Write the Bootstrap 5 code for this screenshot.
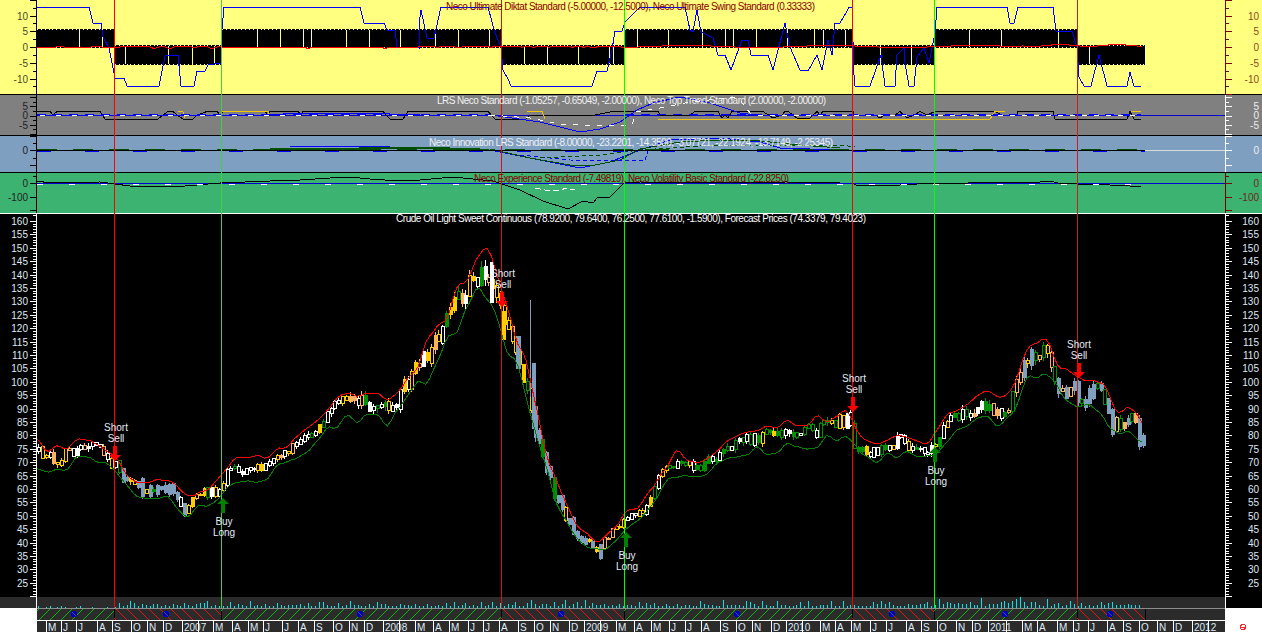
<!DOCTYPE html>
<html lang="en">
<head>
<meta charset="utf-8">
<title>Crude Oil Light Sweet Continuous</title>
<link href="https://cdn.jsdelivr.net/npm/bootstrap@5.3.0/dist/css/bootstrap.min.css" rel="stylesheet">
<style>
html,body{margin:0;background:#fff;overflow:hidden}
.stage{width:1262px;height:632px;overflow:hidden}
.pane{width:1262px;flex:none}
.pane svg{display:block;width:1262px;height:100%}
.pane-yellow{height:95px;background:#ffff80}
.pane-grey{height:41px;background:#808080}
.pane-blue{height:37px;background:#7f9fc0}
.pane-green{height:41px;background:#3cb371}
.pane-main{height:394px;background:#000}
.pane-foot{height:24px;background:#fff}
.overlay{left:0;top:0;width:1262px;height:632px;pointer-events:none}
svg text{font-family:"Liberation Sans",Arial,sans-serif;font-size:10px}
.crisp *{shape-rendering:crispEdges}
.crisp .smooth-line{shape-rendering:auto}
</style>
</head>
<body>
<div class="stage position-relative d-flex flex-column">
  <div class="pane pane-yellow"><svg class="crisp" id="sy" viewBox="0 0 1262 95"></svg></div>
  <div class="pane pane-grey"><svg class="crisp" id="sg" viewBox="0 95 1262 41"></svg></div>
  <div class="pane pane-blue"><svg class="crisp" id="sb" viewBox="0 136 1262 37"></svg></div>
  <div class="pane pane-green"><svg class="crisp" id="sn" viewBox="0 173 1262 41"></svg></div>
  <div class="pane pane-main"><svg class="crisp" id="sm" viewBox="0 214 1262 394"></svg></div>
  <div class="pane pane-foot"><svg class="crisp" id="sf" viewBox="0 608 1262 24"></svg></div>
  <svg class="overlay position-absolute" id="so" viewBox="0 0 1262 632">
    <g class="crisp" id="sol"></g>
    <text x="446" y="10" textLength="369" lengthAdjust="spacing" fill="#8b0000">Neco Ultimate Diktat Standard (-5.00000, -12.5000), Neco Ultimate Swing Standard (0.33333)</text>
    <text x="437" y="104" textLength="389" lengthAdjust="spacing" fill="#f0f0f0">LRS Neco Standard (-1.05257, -0.65049, -2.00000), Neco Top Trend Standard (2.00000, -2.00000)</text>
    <text x="429" y="146" textLength="404" lengthAdjust="spacing" fill="#f0f0f0">Neco Innovation LRS Standard (-8.00000, -23.2201, -14.3500, -3.07721, -22.1924, -13.7149, -2.25345)</text>
    <text x="474" y="182" textLength="315" lengthAdjust="spacing" fill="#8b0000">Neco Experience Standard (-7.49819), Neco Volatility Basic Standard (-22.8250)</text>
    <text x="396" y="222" textLength="470" lengthAdjust="spacing" fill="#fff">Crude Oil Light Sweet Continuous (78.9200, 79.6400, 76.2500, 77.6100, -1.5900), Forecast Prices (74.3379, 79.4023)</text>
    <g id="sig"></g>
  </svg>
</div>
<script>
const $=id=>document.getElementById(id);
const add=(id,s)=>{$(id).insertAdjacentHTML('beforeend',s)};
function rng(a){return function(){a|=0;a=a+0x6D2B79F5|0;let t=Math.imul(a^a>>>15,1|a);t=t+Math.imul(t^t>>>7,61|t)^t;return((t^t>>>14)>>>0)/4294967296}}
const pl=(p,c,w,extra)=>`<polyline fill="none" stroke="${c}" stroke-width="${w||1}" ${extra||''} points="${p.map(a=>a.join(',')).join(' ')}"/>`;
const ln=(x1,y1,x2,y2,c,extra)=>`<line x1="${x1}" y1="${y1}" x2="${x2}" y2="${y2}" stroke="${c}" ${extra||''}/>`;
const rc=(x,y,w,h,c)=>`<rect x="${x}" y="${y}" width="${w}" height="${h}" fill="${c}"/>`;
const tx=(x,y,t,c,a)=>`<text x="${x}" y="${y}" fill="${c}" text-anchor="${a||'end'}">${t}</text>`;
const SIG=[[36,'g'],[114,'r'],[221,'g'],[501,'r'],[624,'g'],[852,'r'],[934,'g'],[1077,'r'],[1145,'']];

function axis(id,L,R,ticks,labs,lc,rc2){
  let s=ln(36.5,L[0],36.5,L[1],lc.a)+ln(1225.5,L[0],1225.5,L[1],rc2.a);
  ticks.forEach(t=>{const y=t[0]+.5,M=t[1];
    s+=ln(M?30:33,y,36,y,lc.a)+ln(1226,y,M?1232:1229,y,rc2.a)});
  labs.forEach(t=>{s+=tx(28,t[0]+3.5,t[1],lc.t)+tx(1259,t[0]+3.5,t[1],rc2.t)});
  add(id,s);
}
/* ---------- yellow pane ---------- */
(function(){
  let s='';const r=rng(11);
  const gaps=[79,102,125,168,192,214,257,280,303,311,346,369,400,435,458,489,524,547,578,609,613,637,668,702,725,733,756,787,814,823,845,880,911,969,1001,1058,1089];
  for(let i=0;i<SIG.length-1;i++){
    const a=SIG[i][0]+1,b=SIG[i+1][0]+(i==SIG.length-2?0:1),long=SIG[i][1]=='g';
    const t=long?29:45,h=long?19:19.5;
    s+=rc(a,t,b-a,h,'#000');
    s+=ln(a,t+.5,b,t+.5,'#ffff80','stroke-dasharray="1 2.85"');
    s+=ln(a,t+h-.5,b,t+h-.5,'#ffff80','stroke-dasharray="1 2.85"');
  }
  gaps.forEach(g=>{const neg=SIG.some((q,i)=>q[1]=='r'&&g>q[0]&&g<SIG[i+1][0]);s+=ln(g+.5,neg?46:30,g+.5,neg?64:47,'#ffff80')});
  const red=[];for(let x=37;x<=1144;x+=3.85){let y=47;
    if(x<115)y=47+(r()<.2?-1:0);
    else if(x<221)y=46.5+(r()<.3?1.5:0);
    else if(x<420)y=47+(r()<.25?1:0);
    else if(x<624)y=46.5+(r()<.2?1:-.5);
    else if(x<1020)y=46.5+Math.sin(x/23);
    else y=45.5+Math.sin(x/9)*.9;
    red.push([x.toFixed(1),y])}
  const blue=[[37,7],[89,7],[93,23],[101,23],[103,37],[109,48],[115,78],[124,78],[127,86],[159,86],[165,56],[178,55],[181,86],[194,86],[197,71],[205,71],[208,65],[221,63],[221,40],[224,7],[360,7],[364,23],[384,23],[387,30],[395,31],[397,47],[419,48],[419,25],[421,10],[427,38],[434,38],[441,7],[488,7],[495,33],[501,47],[503,70],[508,79],[511,86],[592,86],[597,71],[607,71],[612,50],[615,31],[622,31],[625,22],[640,7],[685,7],[690,30],[693,32],[697,10],[701,32],[713,38],[718,55],[725,55],[731,70],[742,40],[748,40],[751,55],[768,55],[773,70],[785,23],[790,47],[800,70],[808,71],[817,55],[822,70],[828,40],[832,55],[835,23],[840,23],[846,13],[849,7],[852,7],[854,75],[855,86],[870,86],[881,55],[885,86],[895,86],[897,55],[904,48],[905,63],[909,86],[914,86],[917,57],[924,48],[929,63],[935,33],[937,7],[1007,7],[1010,23],[1014,23],[1018,7],[1053,7],[1056,31],[1072,31],[1077,47],[1079,77],[1084,86],[1091,86],[1099,55],[1107,86],[1127,86],[1130,72],[1134,86],[1141,86]];
  s+=pl(blue,'#0000ff',1)+pl(red,'#ff0000',1);
  s+=rc(0,94,1262,1,'#000');
  add('sy',s);
  const t=[];for(let v=-15;v<=15;v+=2.5){t.push([Math.round(47-v*3.15),v%5==0])}
  axis('sy',[0,94],0,t,[[16,'10'],[31,'5'],[47,'0'],[63,'-5'],[79,'-10']],{a:'#000',t:'#4a4a28'},{a:'#7a0000',t:'#8a4a20'});
})();
/* ---------- grey pane ---------- */
(function(){
  let s='';
  s+=ln(37,115.5,1225,115.5,'#0000d0');
  const top=111.5,lo=119,m=115;
  const black=[[37,top],[50,top],[53,m],[57,top],[100,top],[105,lo],[158,lo],[163,m],[168,top],[173,top],[177,m],[183,lo],[193,lo],[197,m],[207,top],[217,top],[220,m],[223,top],[265,top],[268,m],[270,top],[298,top],[301,m],[303,top],[383,top],[390,lo],[403,lo],[408,top],[488,top],[495,lo],[526,lo],[530,m],[595,m],[613,top],[658,top],[660,m],[690,m],[695,top],[718,top],[722,118],[725,m],[728,118],[732,top],[763,top],[770,116],[773,118],[782,m],[785,top],[788,top],[797,118],[810,118],[817,top],[820,m],[823,top],[853,top],[854,m],[875,m],[880,118],[885,m],[895,m],[900,top],[907,118],[914,m],[920,top],[927,m],[935,top],[995,top],[1002,m],[1017,m],[1017,top],[1053,top],[1055,lo],[1127,lo],[1130,top],[1134,lo],[1141,lo]];
  s+=pl(black,'#000');
  s+=pl([[178,111.5],[183,112],[185,118]],'#f5c400');
  s+=pl([[222,111.5],[268,111.5],[269,115]],'#f5c400');
  s+=pl([[527,111],[542,111],[545,119]],'#f5c400');
  s+=pl([[658,119],[990,119],[995,111.5],[1005,111.5]],'#f5c400');
  s+=pl([[1131,111],[1141,111]],'#f5c400');
  s+=pl([[37,116],[270,115],[290,113.5],[380,113.5],[400,114.5],[420,115],[491,115],[540,122],[580,132],[600,129],[620,122],[637,110],[653,103],[680,97],[710,103],[740,113],[760,115.5],[1141,115]],'#0000ff');
  s+=ln(37,114.5,490,114.5,'#0000ff','stroke-dasharray="9 7" stroke-width="1"');
  s+=ln(625,114.5,1141,114.5,'#0000ff','stroke-dasharray="9 7" stroke-width="1"');
  s+=pl([[40,116],[490,115]],'#fff',1,'stroke-dasharray="5 11"');
  s+=pl([[490,115],[530,118],[560,124],[600,126],[632,125],[636,112],[660,108],[690,102],[738,97],[745,107],[752,115],[1141,115]],'#fff',1,'stroke-dasharray="5 7"');
  s+=rc(0,135,1262,1,'#000');
  add('sg',s);
  const t=[];for(let v=-10;v<=10;v+=2.5){const y=Math.round(115.5-v*1.85);if(y>95&&y<135)t.push([y,v%5==0])}
  axis('sg',[95,135],0,t,[[106,'5'],[115,'0'],[125,'-5']],{a:'#000',t:'#222'},{a:'#fff',t:'#eee'});
})();
/* ---------- blue pane ---------- */
(function(){
  let s='';
  s+=ln(1145,150.5,1225,150.5,'#d8d8d8');
  s+=pl([[490,150],[540,160],[580,168],[610,162],[640,150],[670,140],[720,138],[760,142],[780,148],[840,150]],'#0000ff');
  s+=pl([[490,149],[530,158],[570,165],[590,166],[620,160],[640,149],[680,142],[720,140],[760,141],[800,145],[840,148]],'#005000');
  s+=pl([[520,155],[570,160],[645,161],[648,150],[672,150]],'#0000ff',1,'stroke-dasharray="4 3"');
  s+=pl([[540,158],[600,155],[640,150],[700,146],[840,145],[855,147]],'#005000',1,'stroke-dasharray="4 3"');
  s+=pl([[290,147],[300,146],[380,146],[400,148],[420,149]],'#0000ff');
  s+=ln(37,151.5,1145,151.5,'#0000ff','stroke-dasharray="14 34"');
  s+=pl([[270,149],[360,149],[360,148],[420,148],[480,149]],'#005000',2);
  s+=ln(37,150.5,1145,150.5,'#000');
  s+=ln(37,149.5,1143,149.5,'#005000','stroke-dasharray="20 16"');
  s+=rc(0,172,1262,1,'#000');
  add('sb',s);
  axis('sb',[136,172],0,[[136,true],[143,false],[150,true],[158,false],[165,true]],[[150,'0']],{a:'#000',t:'#222'},{a:'#fff',t:'#eee'});
})();
/* ---------- green pane ---------- */
(function(){
  let s='';
  s+=ln(37,183.5,1225,183.5,'#0000d0');
  s+=pl([[37,181],[50,183],[100,182],[115,184],[130,186],[170,186],[185,186],[220,183],[270,181],[300,180],[330,178],[350,177],[370,179],[400,181],[420,180],[453,177],[493,181],[520,190],[543,201],[568,209],[583,201],[593,203],[597,198],[610,197],[624,183],[640,182],[700,183],[786,182],[840,183],[852,183],[856,185],[870,185],[900,185],[934,183],[968,183],[975,182],[1000,182],[1040,182],[1050,181],[1058,183],[1077,184],[1100,184],[1110,185],[1130,186],[1141,186]],'#000');
  s+=ln(37,184,1141,184,'#fff','stroke-dasharray="6 26"');
  s+=pl([[535,188],[545,190],[555,191],[562,190],[565,188],[575,190]],'#fff',1,'stroke-dasharray="6 3"');
  s+=rc(0,213,1262,1,'#fff');
  add('sn',s);
  axis('sn',[173,213],0,[[183,true],[197,true],[210,true],[176,false]],[[183,'0'],[197,'-100']],{a:'#000',t:'#222'},{a:'#7a0000',t:'#6a2a20'});
})();
/* ---------- main pane ---------- */
(function(){
  const kp=[[37,452],[60,460],[85,445],[100,450],[115,462],[125,480],[145,490],[165,490],[175,490],[187,512],[200,495],[222,490],[230,470],[250,470],[270,465],[295,445],[320,430],[345,400],[370,405],[395,405],[420,370],[440,340],[460,300],[485,266],[495,285],[505,325],[520,350],[535,420],[555,490],[575,530],[600,550],[625,520],[645,510],[665,470],[680,460],[700,470],[740,440],[780,435],[820,430],[850,420],[860,450],[880,450],[900,440],[930,450],[950,425],[985,405],[1010,415],[1025,365],[1050,350],[1060,385],[1085,395],[1100,385],[1115,425],[1135,420],[1145,440]];
  const c0=x=>{for(let i=1;i<kp.length;i++)if(x<=kp[i][0]){const a=kp[i-1],b=kp[i];return a[1]+(b[1]-a[1])*(x-a[0])/(b[0]-a[0])}return kp[kp.length-1][1]};
  const price=y=>160-(y-221)/2.68;
  const r=rng(2012),nr=rng(77),er=rng(909);
  const Y='#ffcc00',O='#ffb060',W='#ffffff',B='#7f9fc0',G='#009000';
  const pal=[[115,[W,W,Y,O]],[190,[B,B,Y,G,W]],[260,[O,W,W,Y,G]],[400,[W,O,Y,W,G]],[490,[Y,O,Y,W,G]],[505,[W,Y]],[525,[Y,Y,O]],[600,[B,B,B,G,Y]],[690,[O,G,Y,W]],[860,[G,G,W,G,Y]],[950,[W,W,Y,G]],[1020,[W,G,W,O]],[1060,[Y,O,B,G]],[1145,[B,G,G,B,O]]];
  const knotsA=[],knotsB=[];for(let i=0;i<120;i++){knotsA.push(er()*2-1);knotsB.push(er()*2-1)}
  const knot=(K,x,step)=>{const u=(x-37)/step,i=Math.floor(u),f=u-i;const ff=f*f*(3-2*f);return K[i]*(1-ff)+K[i+1]*ff};
  const xs=[],cy=[];
  for(let x=37;x<1148;x+=3.85){
    xs.push(x);const b=c0(x),p=price(b);
    cy.push(b+(nr()-.5)*p*.17);
  }
  const hi=[],lo=[],tops=[],bots=[],cols=[],fill=[];
  for(let i=0;i<xs.length-1;i++){
    const p=price(cy[i]),size=p/70;
    let t=Math.min(cy[i],cy[i+1])-r()*1.5*size,b=Math.max(cy[i],cy[i+1])+r()*1.5*size;
    const set=pal.find(q=>xs[i]<q[0])[1];
    const col=set[Math.floor(r()*set.length)];
    if(col==B){t-=r()*5;b+=r()*7}
    if(b-t<2)b=t+2;
    tops.push(t);bots.push(b);
    hi.push(t-r()*3*size);lo.push(b+r()*3*size);
    cols.push(col);
    fill.push(r()<.35);
  }
  let s='';
  for(let i=0;i<tops.length;i++){
    const X=Math.round(xs[i]),col=cols[i];
    s+=ln(X+1.5,hi[i],X+1.5,lo[i],col);
    if(fill[i]||col==B)s+=rc(X,tops[i],4,bots[i]-tops[i],col);
    else s+=`<rect x="${X+.5}" y="${tops[i]}" width="3" height="${bots[i]-tops[i]}" fill="#000" stroke="${col}"/>`;
  }
  s+=ln(530.5,300,530.5,397,B);
  s+=rc(490,262,4,41,W)+rc(502,311,4,29,Y)+rc(532,363,4,66,B)+rc(516,336,5,33,B);
  const red=[],grn=[];
  for(let i=0;i<tops.length;i++){
    const x=xs[i];
    let m=0,n=0;
    for(let d=-7.5;d<=7.5;d+=3.75){m+=c0(x+d);n++}
    m/=n;
    const p=price(m);
    red.push([x.toFixed(1),(m-p*.12-knot(knotsA,x,10)*p*.075).toFixed(1)]);
    grn.push([x.toFixed(1),(m+p*.15+knot(knotsB,x,10)*p*.08).toFixed(1)]);
  }
  s+=pl(grn,'#008000')+pl(red,'#ff0000');
  s+=rc(0,597,1225,11,'#2b2b2b');
  const v=rng(5);
  for(let x=38;x<1141;x+=3.85){
    let h;
    if(x<115)h=v()<.5?0:1+v();
    else if(x<940)h=1.5+v()*v()*8;
    else h=2+v()*v()*10;
    if(h>0)s+=rc(Math.round(x),608-Math.round(h),1,Math.round(h),'#00e5ee');
  }
  add('sm',s);
  const t=[],lab=[];
  for(let p=160;p>=20;p--){
    const y=Math.round(221+(160-p)*2.68);
    t.push([y,p%5==0]);
    if(p%5==0&&p>=25)lab.push([y,String(p)]);
  }
  t.push([215,false]);
  axis('sm',[214,608],0,t,lab,{a:'#fff',t:'#dfe8f5'},{a:'#fff',t:'#dfe8f5'});
})();
/* ---------- hatch band and dates ---------- */
(function(){
  let s=rc(0,608,37,24,'#fff')+rc(1225,608,37,24,'#fff');
  s+=rc(37,609,1188,23,'#2b2b2b');
  s+=rc(37,608,1188,1,'#8c8c8c');
  for(let i=0;i<SIG.length-1;i++){
    const a=Math.max(SIG[i][0],37),b=SIG[i+1][0],up=SIG[i][1]=='g';
    const h=11;
    for(let x=a-h+2;x<b;x+=11){
      const x1=Math.max(x,a),x2=Math.min(x+h,b);
      if(x2<=x1)continue;
      if(up)s+=ln(x1,620-(x1-x),x2,620-(x2-x),'#00e000','class="smooth-line" stroke-width=".8"');
      else s+=ln(x1,609+(x1-x),x2,609+(x2-x),'#ff1010','class="smooth-line" stroke-width=".9"');
    }
    s+=rc(b,609,1,11,'#000');
  }
  [74,166,360,561,737,892,1005,1110].forEach(x=>{
    s+=`<circle cx="${x}" cy="614" r="3" fill="#0000c0"/>`;
    s+=ln(x-2,612,x+2,616,'#405070');
  });
  s+=rc(37,620,1188,1,'#fff');
  const d=[[46,'M'],[61,'J'],[76,'J'],[97,'A'],[112,'S'],[131,'O'],[147,'N'],[163,'D'],[182,'2007'],[198,''],[213,'M'],[232,'A'],[248,'M'],[263,'J'],[282,'J'],[298,'A'],[314,'S'],[333,'O'],[349,'N'],[364,'D'],[383,'2008'],[399,''],[415,'M'],[433,'A'],[449,'M'],[468,'J'],[483,'J'],[499,'A'],[518,'S'],[534,'O'],[550,'N'],[569,'D'],[584,'2009'],[600,''],[616,'M'],[634,'A'],[651,'M'],[669,'J'],[685,'J'],[701,'A'],[720,'S'],[736,'O'],[752,'N'],[771,'D'],[786,'2010'],[802,''],[820,'M'],[835,'A'],[851,'M'],[870,'J'],[886,'J'],[906,'A'],[921,'S'],[937,'O'],[956,'N'],[972,'D'],[988,'2011'],[1006,''],[1022,'M'],[1037,'A'],[1057,'M'],[1073,'J'],[1088,'J'],[1107,'A'],[1123,'S'],[1139,'O'],[1157,'N'],[1173,'D'],[1192,'2012'],[1208,'']];
  d.forEach(q=>{s+=rc(q[0],621,1,11,'#fff');if(q[1])s+=tx(q[0]+2,631,q[1],'#dfe8f5','start')});
  s+=`<circle cx="1243" cy="627" r="2.5" fill="#fff" stroke="#ff2020"/>`+ln(1241,627,1245,627,'#ff2020');
  add('sf',s);
})();
/* ---------- signal lines, arrows, labels ---------- */
(function(){
  let s='';
  [[114,'#ff0000'],[221,'#40d040'],[501,'#d81010'],[624,'#00ff00'],[852,'#ff0000'],[934,'#00ff00'],[1077,'#c82020']].forEach(q=>{
    s+=rc(q[0],0,1,608,q[1]);
  });
  add('sol',s);
  const downA=(x,y)=>`<path d="M${x-2} ${y}h4v9h4l-6 6l-6 -6h4z" fill="#ff0000"/>`;
  const upA=(x,y)=>`<path d="M${x-2} ${y+14}h4v-9h4l-6 -6l-6 6h4z" fill="#008000"/>`;
  const lbl=(x,y,a,b)=>tx(x,y,a,'#e4ecf8','middle')+tx(x,y+11,b,'#e4ecf8','middle');
  let t='';
  t+=lbl(116,431,'Short','Sell')+downA(115,446);
  t+=lbl(224,525,'Buy','Long')+upA(223,499);
  t+=lbl(503,277,'Short','Sell')+downA(502,292);
  t+=lbl(627,559,'Buy','Long')+upA(626,533);
  t+=lbl(854,382,'Short','Sell')+downA(853,397);
  t+=lbl(936,474,'Buy','Long')+upA(935,448);
  t+=lbl(1079,348,'Short','Sell')+downA(1079,363);
  add('sig',t);
})();
</script>
<script src="https://cdn.jsdelivr.net/npm/bootstrap@5.3.0/dist/js/bootstrap.bundle.min.js"></script>
</body>
</html>
